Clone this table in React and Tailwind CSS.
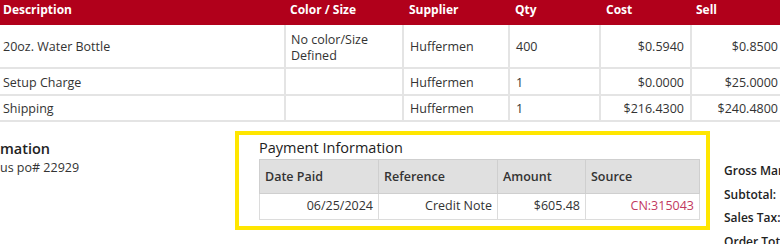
const items = [
  { desc: "20oz. Water Bottle", color: ["No color/Size", "Defined"], supplier: "Huffermen", qty: "400", cost: "$0.5940", sell: "$0.8500", h: "h-[43px]" },
  { desc: "Setup Charge", color: [], supplier: "Huffermen", qty: "1", cost: "$0.0000", sell: "$25.0000", h: "h-[27px]" },
  { desc: "Shipping", color: [], supplier: "Huffermen", qty: "1", cost: "$216.4300", sell: "$240.4800", h: "h-[26px]" },
];

export default function App() {
  return (
    <div className="w-[780px] h-[244px] overflow-hidden bg-white text-[#333] font-['Open_Sans',sans-serif]">
      <table className="w-[784px] table-fixed border-collapse text-[12.5px]">
        <colgroup>
          <col className="w-[285px]" />
          <col className="w-[118px]" />
          <col className="w-[106px]" />
          <col className="w-[91px]" />
          <col className="w-[91px]" />
          <col className="w-[93px]" />
        </colgroup>
        <thead>
          <tr className="bg-[#b1001b] text-white h-[25px] text-[12px]">
            <th className="text-left font-bold align-top pt-[1px] pl-[3px]">Description</th>
            <th className="text-left font-bold align-top pt-[1px] pl-[5px]">Color / Size</th>
            <th className="text-left font-bold align-top pt-[1px] pl-[6px]">Supplier</th>
            <th className="text-left font-bold align-top pt-[1px] pl-[6px]">Qty</th>
            <th className="text-left font-bold align-top pt-[1px] pl-[6px]">Cost</th>
            <th className="text-left font-bold align-top pt-[1px] pl-[5px]">Sell</th>
          </tr>
        </thead>
        <tbody>
          {items.map((r) => (
            <tr key={r.desc} className={`${r.h} border-b-2 border-[#e4e4e4]`}>
              <td className="pl-[3px] pt-[3px] border-r-2 border-[#e4e4e4]">{r.desc}</td>
              <td className="pl-[5px] pt-[4px] leading-[16px] border-r-2 border-[#e4e4e4]">
                {r.color.map((c) => (
                  <div key={c}>{c}</div>
                ))}
              </td>
              <td className="pl-[6px] pt-[3px] border-r-2 border-[#e4e4e4]">{r.supplier}</td>
              <td className="pl-[6px] pt-[3px] border-r-2 border-[#e4e4e4]">{r.qty}</td>
              <td className="text-right pr-[6px] pt-[3px] border-r-2 border-[#e4e4e4]">{r.cost}</td>
              <td className="text-right pr-[6px] pt-[3px]">{r.sell}</td>
            </tr>
          ))}
        </tbody>
      </table>

      <div className="flex items-start mt-[9px]">
        <div className="w-[235px] shrink-0 pt-[8px]">
          <div className="text-[14.5px] leading-[20px] font-semibold text-[#222]">mation</div>
          <div className="text-[12.5px] leading-[16px] mt-[1px]">us po# 22929</div>
        </div>

        <div className="w-[475px] shrink-0 border-4 border-[#ffe600] pl-[20px] pr-[6px] pb-[6px] pt-[2px]">
          <div className="text-[14.5px] leading-[22px] text-[#222]">Payment Information</div>
          <table className="w-full table-fixed border-collapse text-[12.5px]">
            <colgroup>
              <col className="w-[119px]" />
              <col className="w-[119px]" />
              <col className="w-[88px]" />
              <col />
            </colgroup>
            <thead>
              <tr className="bg-[#e0e0e0] h-[34px]">
                <th className="text-left font-semibold pl-[5px] pt-[2px] border border-[#cfcfcf]">Date Paid</th>
                <th className="text-left font-semibold pl-[5px] pt-[2px] border border-[#cfcfcf]">Reference</th>
                <th className="text-left font-semibold pl-[5px] pt-[2px] border border-[#cfcfcf]">Amount</th>
                <th className="text-left font-semibold pl-[5px] pt-[2px] border border-[#cfcfcf]">Source</th>
              </tr>
            </thead>
            <tbody>
              <tr className="h-[26px]">
                <td className="text-right pr-[5px] border border-[#dcdcdc]">06/25/2024</td>
                <td className="text-right pr-[5px] border border-[#dcdcdc]">Credit Note</td>
                <td className="text-right pr-[5px] border border-[#dcdcdc]">$605.48</td>
                <td className="text-right pr-[5px] border border-[#dcdcdc] text-[#c2395e]">CN:315043</td>
              </tr>
            </tbody>
          </table>
        </div>

        <div className="shrink-0 pl-[14px] pt-[28px] text-[12px] font-semibold text-[#222] whitespace-nowrap leading-[23.5px]">
          <div>Gross Margin:</div>
          <div>Subtotal:</div>
          <div>Sales Tax:</div>
          <div>Order Total:</div>
        </div>
      </div>
    </div>
  );
}
